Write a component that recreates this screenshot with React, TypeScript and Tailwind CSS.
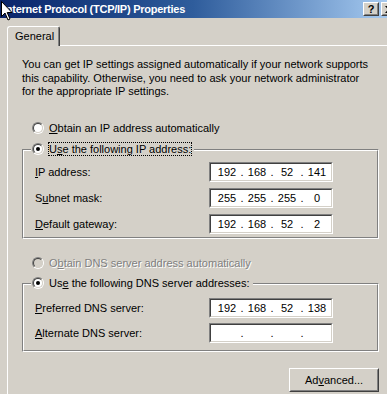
import { Fragment, type ReactNode } from "react";

const sunkenOuter =
  "border border-t-[#808080] border-l-[#808080] border-r-white border-b-white";
const sunkenInner =
  "border border-t-[#404040] border-l-[#404040] border-r-[#d4d0c8] border-b-[#d4d0c8]";
const raisedOuter =
  "border border-t-white border-l-white border-r-[#404040] border-b-[#404040]";
const raisedInner =
  "border border-t-[#d4d0c8] border-l-[#d4d0c8] border-r-[#808080] border-b-[#808080]";

function Radio({ checked, disabled }: { checked?: boolean; disabled?: boolean }) {
  return (
    <span className={`flex size-3 shrink-0 rounded-full ${sunkenOuter}`}>
      <span
        className={`flex flex-1 items-center justify-center rounded-full ${sunkenInner} ${
          disabled ? "bg-[#d4d0c8]" : "bg-white"
        }`}
      >
        {checked ? <span className="size-1 rounded-full bg-black" /> : null}
      </span>
    </span>
  );
}

function RadioLabel({
  children,
  checked,
  disabled,
  focused,
}: {
  children: ReactNode;
  checked?: boolean;
  disabled?: boolean;
  focused?: boolean;
}) {
  return (
    <div className="flex h-[14px] items-center gap-[4px]">
      <Radio checked={checked} disabled={disabled} />
      <span
        className={`whitespace-nowrap border leading-[12px] ${
          focused ? "border-dotted border-black" : "border-transparent"
        } ${disabled ? "text-[#808080] [text-shadow:1px_1px_0_#ffffff]" : ""}`}
      >
        {children}
      </span>
    </div>
  );
}

function IpField({ parts }: { parts: string[] }) {
  return (
    <div className={`flex h-5 w-[124px] shrink-0 ${sunkenOuter}`}>
      <div className={`flex flex-1 items-center bg-white pl-[4px] text-black ${sunkenInner}`}>
        {parts.map((p, i) => (
          <Fragment key={i}>
            {i > 0 ? <span className="w-[6px] text-center">.</span> : null}
            <span className="w-6 text-center">{p}</span>
          </Fragment>
        ))}
      </div>
    </div>
  );
}

function FieldRow({ label, parts }: { label: ReactNode; parts: string[] }) {
  return (
    <div className="flex h-5 items-center">
      <span className="w-[174px] whitespace-nowrap">{label}</span>
      <IpField parts={parts} />
    </div>
  );
}

function GroupBox({
  legend,
  className,
  children,
}: {
  legend: ReactNode;
  className: string;
  children: ReactNode;
}) {
  return (
    <div className={`relative ml-[14px] w-[357px] ${sunkenOuter} ${className}`}>
      <div className="absolute left-[8px] top-[-8px] z-10 bg-[#d4d0c8] pl-px pr-[2px]">
        {legend}
      </div>
      <div className="h-full border border-t-white border-l-white border-r-[#808080] border-b-[#808080]">
        {children}
      </div>
    </div>
  );
}

function TitleBar() {
  return (
    <div className="flex h-[18px] shrink-0 items-center bg-linear-to-r from-[#0a246a] via-[#2f5d9c] via-50% to-[#a6caf0] pl-[3px]">
      <span className="whitespace-nowrap text-[11px] font-bold tracking-[-0.25px] text-white">
        Internet Protocol (TCP/IP) Properties
      </span>
      <div className="ml-auto mr-[-10px] flex shrink-0 gap-[2px]">
        <div className={`flex h-[14px] w-4 bg-[#d4d0c8] ${raisedOuter}`}>
          <div
            className={`flex flex-1 items-center justify-center text-[11px] font-bold leading-none text-black ${raisedInner}`}
          >
            ?
          </div>
        </div>
        <div className={`flex h-[14px] w-4 bg-[#d4d0c8] ${raisedOuter}`}>
          <div className={`flex flex-1 items-center justify-center ${raisedInner}`}>
            <svg width="8" height="7" viewBox="0 0 8 7" aria-hidden>
              <path d="M0 0h2l2 2.5L6 0h2L5 3.5 8 7H6L4 4.5 2 7H0l3-3.5z" fill="#000" />
            </svg>
          </div>
        </div>
      </div>
    </div>
  );
}

function Cursor() {
  return (
    <svg
      className="absolute left-0 top-0 z-20"
      width="14"
      height="22"
      viewBox="0 0 14 22"
      aria-hidden
    >
      <path
        d="M1.5 1.5V16.5L5 13L8 20L10 19L7.2 12.5H12Z"
        fill="#fff"
        stroke="#000"
        strokeWidth="1"
        strokeLinejoin="miter"
      />
    </svg>
  );
}

export default function App() {
  return (
    <div className="relative flex h-[394px] w-[387px] flex-col overflow-hidden bg-[#d4d0c8] font-['Liberation_Sans',Arial,sans-serif] text-[11px] text-black">
      <Cursor />
      <TitleBar />

      <div className="relative z-10 ml-[7px] mt-[8px] mb-[-1px] flex h-[20px] w-[53px] rounded-t-[3px] border-l border-t border-r border-white border-r-[#404040] bg-[#d4d0c8]">
        <div className="flex flex-1 items-center border-r border-[#808080] pl-[7px]">
          General
        </div>
      </div>

      <div className="ml-[7px] flex w-[420px] flex-1 flex-col border-l border-t border-white">
        <p className="mt-[12px] ml-[14px] h-[41px] whitespace-nowrap leading-[13.5px]">
          You can get IP settings assigned automatically if your network supports
          <br />
          this capability. Otherwise, you need to ask your network administrator
          <br />
          for the appropriate IP settings.
        </p>

        <div className="ml-[24px] mt-[22px]">
          <RadioLabel>
            <span className="underline">O</span>btain an IP address automatically
          </RadioLabel>
        </div>

        <GroupBox
          className="mt-[14px] h-[90px]"
          legend={
            <RadioLabel checked focused>
              U<span className="underline">s</span>e the following IP address:
            </RadioLabel>
          }
        >
          <div className="flex flex-col gap-[6px] pl-[11px] pt-[11px]">
            <FieldRow
              label={
                <>
                  <span className="underline">I</span>P address:
                </>
              }
              parts={["192", "168", "52", "141"]}
            />
            <FieldRow
              label={
                <>
                  S<span className="underline">u</span>bnet mask:
                </>
              }
              parts={["255", "255", "255", "0"]}
            />
            <FieldRow
              label={
                <>
                  <span className="underline">D</span>efault gateway:
                </>
              }
              parts={["192", "168", "52", "2"]}
            />
          </div>
        </GroupBox>

        <div className="ml-[24px] mt-[17px]">
          <RadioLabel disabled>
            O<span className="underline">b</span>tain DNS server address automatically
          </RadioLabel>
        </div>

        <GroupBox
          className="mt-[13px] h-[69px]"
          legend={
            <RadioLabel checked>
              Us<span className="underline">e</span> the following DNS server addresses:
            </RadioLabel>
          }
        >
          <div className="flex flex-col gap-[5px] pl-[11px] pt-[13px]">
            <FieldRow
              label={
                <>
                  <span className="underline">P</span>referred DNS server:
                </>
              }
              parts={["192", "168", "52", "138"]}
            />
            <FieldRow
              label={
                <>
                  <span className="underline">A</span>lternate DNS server:
                </>
              }
              parts={["", "", "", ""]}
            />
          </div>
        </GroupBox>

        <div className={`ml-[281px] mt-[16px] flex h-6 w-[90px] ${raisedOuter}`}>
          <div className={`flex flex-1 items-center justify-center ${raisedInner}`}>
            Ad<span className="underline">v</span>anced...
          </div>
        </div>
      </div>
    </div>
  );
}
